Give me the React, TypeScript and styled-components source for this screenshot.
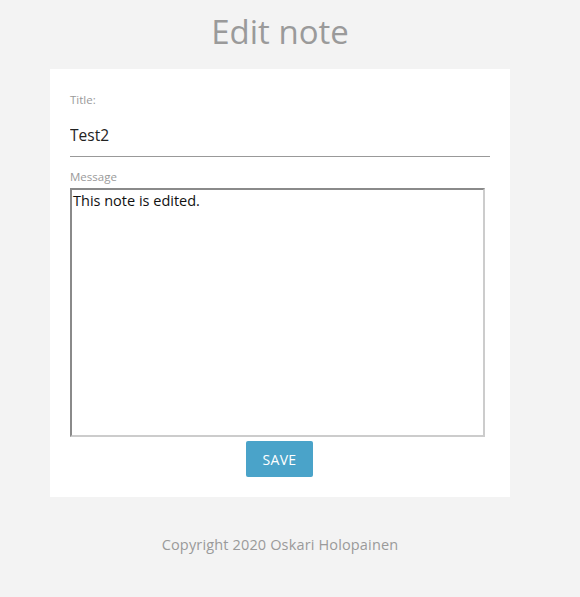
import React from "react";
import styled, { createGlobalStyle } from "styled-components";

const Global = createGlobalStyle`
  html, body { margin: 0; padding: 0; background: #f3f3f3; }
  body { font-family: "Open Sans", "Noto Sans", sans-serif; }
`;

const Page = styled.div`
  width: 560px;
  display: flex;
  flex-direction: column;
  align-items: center;
`;

const Heading = styled.h1`
  margin: 10px 0 0;
  height: 59px;
  font-size: 33px;
  font-weight: 400;
  color: #9a9a9a;
  line-height: 44px;
`;

const Card = styled.form`
  width: 420px;
  background: #fff;
  padding: 24px 20px 20px;
  display: flex;
  flex-direction: column;
`;

const Label = styled.label`
  font-size: 11.5px;
  color: #9a9a9a;
  line-height: 14px;
`;

const TitleInput = styled.input`
  border: none;
  border-bottom: 1px solid #999;
  outline: none;
  font-family: inherit;
  font-size: 15.5px;
  color: #222;
  padding: 0;
  margin: 8px 0 13px;
  height: 41px;
  line-height: 41px;
`;

const MessageArea = styled.textarea`
  width: 415px;
  height: 249px;
  box-sizing: border-box;
  border-style: solid;
  border-width: 2px;
  border-color: #8a8a8a #cccccc #cccccc #8a8a8a;
  padding: 1px 1px;
  font-family: inherit;
  font-size: 14.5px;
  color: #111;
  resize: none;
  outline: none;
  margin-top: 4px;
`;

const Actions = styled.div`
  display: flex;
  justify-content: center;
  margin-top: 4px;
  padding-right: 1px;
`;

const SaveButton = styled.button`
  width: 67px;
  height: 36px;
  background: #4aa3c9;
  color: #fff;
  border: none;
  border-radius: 2px;
  font-family: inherit;
  font-size: 14px;
  letter-spacing: 0.3px;
`;

const Footer = styled.footer`
  margin-top: 38px;
  font-size: 14.5px;
  color: #9a9a9a;
  letter-spacing: 0.15px;
`;

export default function App() {
  return (
    <>
      <Global />
      <Page>
        <Heading>Edit note</Heading>
        <Card onSubmit={(e) => e.preventDefault()}>
          <Label>Title:</Label>
          <TitleInput defaultValue="Test2" />
          <Label>Message</Label>
          <MessageArea defaultValue="This note is edited." />
          <Actions>
            <SaveButton type="submit">SAVE</SaveButton>
          </Actions>
        </Card>
        <Footer>Copyright 2020 Oskari Holopainen</Footer>
      </Page>
    </>
  );
}
